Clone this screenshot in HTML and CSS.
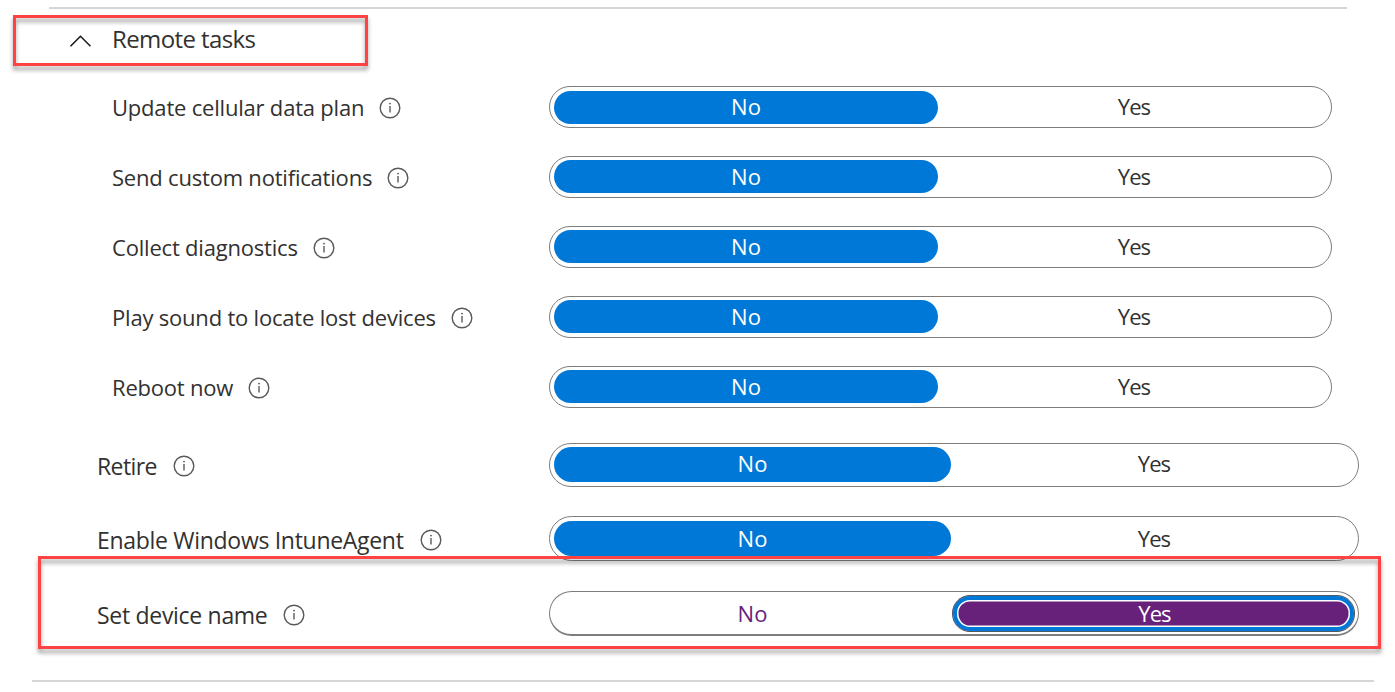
FILE: index.html
```
<!DOCTYPE html>
<html lang="en">
<head>
    <meta charset="UTF-8">
    <meta name="viewport" content="width=device-width, initial-scale=1.0">
    <title>Remote tasks</title>
    <link rel="stylesheet" href="styles.css">
</head>
<body>
    <svg class="sprite" width="0" height="0">
        <symbol id="info" viewBox="0 0 22 22">
            <circle cx="11" cy="11" r="9.8" fill="none" stroke="#5c5a58" stroke-width="1.4"/>
            <path d="M11 9v6.6" fill="none" stroke="#5c5a58" stroke-width="1.4"/>
            <circle cx="11" cy="6.6" r="0.95" fill="#5c5a58"/>
        </symbol>
    </svg>

    <hr class="line line-top">

    <div class="section-header highlight">
        <svg class="chevron" viewBox="0 0 22 12" width="22" height="12">
            <path d="M1.5 11.3L11.5 1.3l10 10" fill="none" stroke="#1b1a19" stroke-width="1.6"/>
        </svg>
        <h2>Remote tasks</h2>
    </div>

    <div class="tasks">
        <div class="row first">
            <div class="label"><span>Update cellular data plan</span><svg class="info"><use href="#info"/></svg></div>
            <div class="toggle"><span class="option selected">No</span><span class="option yes">Yes</span></div>
        </div>
        <div class="row">
            <div class="label"><span>Send custom notifications</span><svg class="info"><use href="#info"/></svg></div>
            <div class="toggle"><span class="option selected">No</span><span class="option yes">Yes</span></div>
        </div>
        <div class="row">
            <div class="label"><span>Collect diagnostics</span><svg class="info"><use href="#info"/></svg></div>
            <div class="toggle"><span class="option selected">No</span><span class="option yes">Yes</span></div>
        </div>
        <div class="row">
            <div class="label"><span>Play sound to locate lost devices</span><svg class="info"><use href="#info"/></svg></div>
            <div class="toggle"><span class="option selected">No</span><span class="option yes">Yes</span></div>
        </div>
        <div class="row">
            <div class="label"><span>Reboot now</span><svg class="info"><use href="#info"/></svg></div>
            <div class="toggle"><span class="option selected">No</span><span class="option yes">Yes</span></div>
        </div>
    </div>

    <div class="row wide retire">
        <div class="label"><span>Retire</span><svg class="info"><use href="#info"/></svg></div>
        <div class="toggle"><span class="option selected">No</span><span class="option yes">Yes</span></div>
    </div>
    <div class="row wide agent">
        <div class="label"><span>Enable Windows IntuneAgent</span><svg class="info"><use href="#info"/></svg></div>
        <div class="toggle"><span class="option selected">No</span><span class="option yes">Yes</span></div>
    </div>
    <div class="device-name highlight">
        <div class="row wide">
            <div class="label"><span>Set device name</span><svg class="info"><use href="#info"/></svg></div>
            <div class="toggle changed"><span class="option">No</span><span class="option selected yes">Yes</span></div>
        </div>
    </div>

    <hr class="line line-bottom">
</body>
</html>
```
FILE: styles.css
```
* {
    box-sizing: border-box;
}
body {
    margin: 0;
    height: 692px;
    overflow: hidden;
    background-color: white;
    color: #323130;
    font-family: "Segoe UI", "Open Sans", "Noto Sans", sans-serif;
    font-size: 22px;
    line-height: 30px;
    display: flow-root;
}
.sprite {
    display: block;
}
.line {
    height: 2px;
    border: none;
    background-color: #d6d6d6;
}
.line-top {
    margin: 7px 48px 0 49px;
}
.line-bottom {
    margin: 31px 21px 0 32px;
}

/* red callout frame */
.highlight {
    position: relative;
}
.highlight::after {
    content: "";
    position: absolute;
    inset: 0;
    border: 3px solid #ff4343;
    filter: drop-shadow(0 4px 2px rgba(0, 0, 0, 0.38));
    pointer-events: none;
}

.section-header {
    display: flex;
    align-items: center;
    width: 355px;
    height: 51px;
    margin: 6px 0 0 13px;
    padding-left: 56px;
}
.section-header h2 {
    margin: 0 0 0 21px;
    padding-bottom: 4px;
    font-size: 24px;
    font-weight: 400;
    letter-spacing: -0.6px;
}

.tasks {
    display: flex;
    flex-direction: column;
    gap: 28px;
    margin-top: 20px;
    padding-left: 15px;
}
.row {
    display: flex;
    align-items: center;
    height: 42px;
    margin-left: 97px;
}
.label {
    display: flex;
    align-items: center;
    width: 437px;
    padding-top: 2px;
    white-space: nowrap;
    letter-spacing: -0.2px;
}
.label span {
    padding-bottom: 2px;
}
.wide .label {
    width: 452px;
    font-size: 23px;
    letter-spacing: -0.3px;
}
.wide .label span {
    padding-bottom: 0;
}
.info {
    width: 22px;
    height: 22px;
    margin-left: 15px;
}
.wide .info {
    margin-left: 16px;
}

.toggle {
    display: flex;
    width: 783px;
    height: 42px;
    padding: 3px 4px 4px;
    border: 1px solid #7f7d7b;
    border-radius: 21px;
}
.first .toggle {
    padding: 4px 4px 3px;
}
.option {
    display: flex;
    flex: 1;
    align-items: center;
    justify-content: center;
    padding-bottom: 2px;
    border-radius: 18px;
}
.option.selected {
    flex: none;
    width: 384px;
    background-color: #0078d7;
    color: white;
}
.option.yes {
    padding-left: 3px;
    letter-spacing: -0.9px;
}
.first .option {
    padding-bottom: 3px;
}

.wide, .wide .toggle {
    height: 45px;
}
.wide .toggle {
    width: 810px;
    border-radius: 23px;
}
.wide .option.selected {
    width: 397px;
}
.retire, .retire .toggle {
    height: 44px;
}
.retire {
    margin-top: 35px;
}
.retire .label {
    letter-spacing: -0.6px;
}
.retire .option {
    padding-bottom: 3px;
}
.agent {
    margin-top: 29px;
}
.agent .toggle {
    padding-top: 4px;
}

.device-name {
    width: 1343px;
    height: 93px;
    margin: -5px 0 0 38px;
    padding: 35px 0 0 59px;
}
.device-name .row {
    margin-left: 0;
}

/* edited value with keyboard focus */
.wide .changed {
    border-bottom-width: 2px;
    padding: 3px 3px 2px;
}
.changed .option {
    color: #68217a;
}
.wide .changed .option.selected {
    width: 403px;
    height: 37px;
    padding-left: 2px;
    border: 1px solid #4f5a66;
    background-color: #68217a;
    box-shadow: inset 0 0 0 4px #0078d7, inset 0 0 0 5.5px white;
    color: white;
}
```
